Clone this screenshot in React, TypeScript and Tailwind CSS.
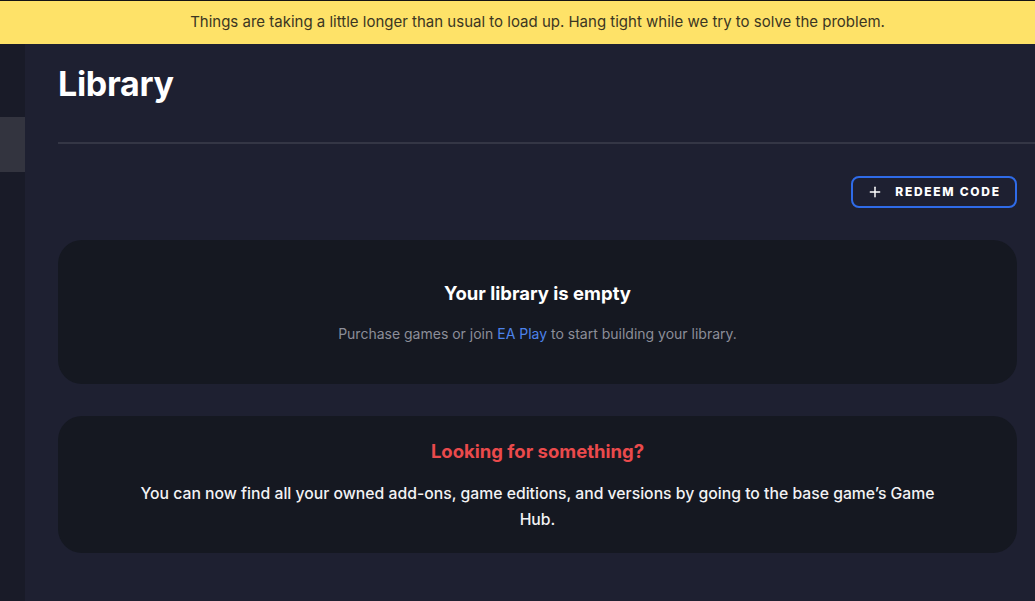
import { Plus } from 'lucide-react';

// Empty library page with a loading-delay notice
export default function App() {
  return (
    <div
      className="h-[601px] w-[1035px] overflow-hidden flex flex-col bg-[#1e2031] border-t border-[#141414]"
      style={{ fontFamily: 'Inter, "Noto Sans", sans-serif' }}
    >
      <div className="h-[43px] shrink-0 bg-[#fee268] flex items-center justify-center pl-[40px] text-[15px] text-[#3b3622]">
        Things are taking a little longer than usual to load up. Hang tight while we try to solve the problem.
      </div>

      <div className="flex flex-1 min-h-0">
        {/* collapsed nav rail */}
        <div className="w-[25px] shrink-0 bg-[#191b28] pt-[73px]">
          <div className="h-[55px] bg-[#33343f]" />
        </div>

        <main className="flex-1 pl-[33px] pr-[18px]">
          <h1 className="text-[34px] font-bold text-white leading-none pt-[23px] tracking-[-0.3px]">Library</h1>
          <div className="mt-[41px] h-[2px] bg-[#343645] -mr-[18px]" />

          <div className="flex justify-end mt-[32px]">
            <button className="h-[32px] w-[166px] flex items-center justify-center gap-[12px] rounded-[8px] border-2 border-[#2f6be8] text-white text-[12px] font-extrabold tracking-[1.7px]">
              <Plus className="w-[16px] h-[16px]" strokeWidth={2.2} />
              REDEEM CODE
            </button>
          </div>

          <section className="mt-[32px] h-[144px] rounded-[24px] bg-[#151821] flex flex-col items-center justify-center">
            <h2 className="text-[18.5px] font-bold text-white">Your library is empty</h2>
            <p className="mt-[15px] text-[14px] text-[#8c8e99]">
              Purchase games or join <span className="text-[#4d83ea]">EA Play</span> to start building your library.
            </p>
          </section>

          <section className="mt-[32px] h-[137px] rounded-[24px] bg-[#151821] flex flex-col items-center pt-[22px]">
            <h2 className="text-[18.5px] font-bold text-[#ea4a4c]">Looking for something?</h2>
            <p className="mt-[15px] max-w-[815px] text-center text-[15.75px] font-medium leading-[26px] text-[#f2f2f4]">
              You can now find all your owned add-ons, game editions, and versions by going to the base game’s Game Hub.
            </p>
          </section>
        </main>
      </div>
    </div>
  );
}
